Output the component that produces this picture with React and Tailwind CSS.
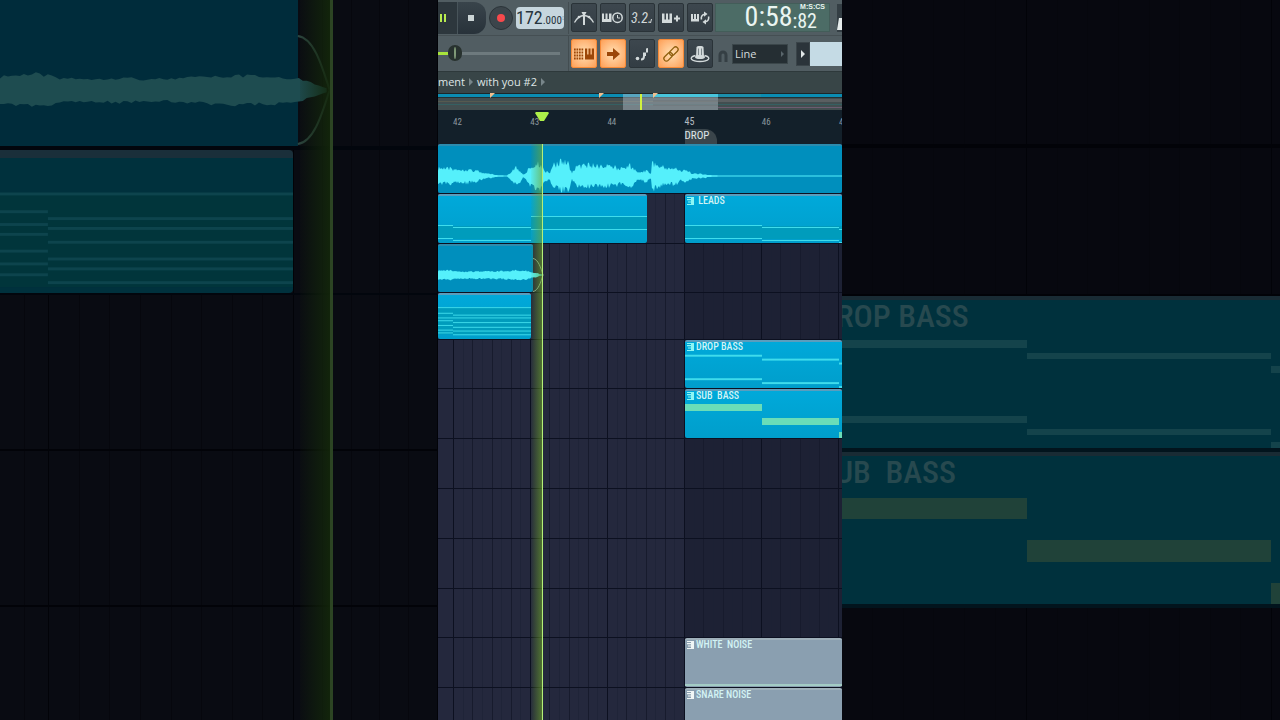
import React from 'react'
import clsx from 'clsx'

const VIEW = 404
const pct = (n, total = VIEW) => `${(n / total) * 100}%`

// [x, amplitude] pairs along the vocal clip
const VOCAL = [
  [0, 9], [10, 9], [20, 8], [30, 8], [40, 6], [46, 3], [56, 2], [69, 1], [73, 5], [78, 10], [82, 7], [85, 2], [88, 3],
  [91, 10], [97, 15], [103, 14], [107, 6], [112, 5], [115, 13], [121, 17], [130, 16], [134, 4], [138, 11], [150, 13],
  [162, 12], [176, 11], [185, 8], [191, 14], [198, 6], [203, 4], [208, 7], [213, 3], [214, 15], [222, 12], [230, 9],
  [238, 10], [243, 5], [247, 7], [255, 3], [268, 2], [285, 1], [404, 1],
]
const PAD = [[0, 5], [12, 5], [22, 4], [45, 4], [60, 4], [75, 5], [86, 5], [95, 3], [105, 1]]
const PAD_BIG = [[0, 14], [36, 17], [60, 13], [90, 12], [130, 13], [150, 11], [190, 13], [240, 15], [280, 14], [300, 12], [331, 1]]

const noise = (i) => Math.abs(Math.sin(i * 12.9898) * 43758.5453) % 1

function wavePath(points, mid, step = 1, rough = 0.35) {
  const end = points[points.length - 1][0]
  const top = []
  const bottom = []
  for (let x = 0, i = 1; x <= end; x += step, i++) {
    let k = 0
    while (k < points.length - 2 && points[k + 1][0] <= x) k++
    const [x0, a0] = points[k]
    const [x1, a1] = points[k + 1]
    const a = a0 + ((a1 - a0) * (x - x0)) / (x1 - x0)
    const up = a < 2 ? a / 2 : a * (1.05 - rough * noise(i))
    const down = a < 2 ? a / 2 : a * (1.1 - rough * noise(i + 500))
    top.push(`${x},${(mid - up).toFixed(1)}`)
    bottom.unshift(`${x},${(mid + down).toFixed(1)}`)
  }
  return `M${top.join('L')}L${bottom.join('L')}Z`
}

// notes: [x, y, width, height]
const TRACKS = [
  { h: 'h-[50px]', clips: [{ x: 0, w: 404, kind: 'vocal' }] },
  {
    h: 'h-[50px]',
    clips: [
      { x: 0, w: 209, shade: [[0, 32, 93, 13], [93, 23, 116, 13]], notes: [[0, 31, 15, 1], [0, 44, 15, 1], [15, 33, 78, 1], [15, 46, 78, 1], [93, 22, 116, 1], [93, 35, 116, 1]] },
      { x: 247, w: 157, name: ' LEADS', shade: [[0, 32, 157, 13]], notes: [[0, 31, 77, 1], [0, 44, 77, 1], [77, 33, 77, 1], [77, 46, 77, 1], [154, 35, 3, 1], [154, 48, 3, 1]] },
    ],
  },
  { h: 'h-[49px]', clips: [{ x: 0, w: 95, kind: 'pad' }] },
  {
    h: 'h-[47px]',
    clips: [
      {
        x: 0, w: 93, shade: [[0, 15, 93, 29]],
        notes: [[0, 15, 93, 1], [0, 21, 15, 1], [0, 26, 15, 1], [0, 29, 15, 1], [0, 34, 15, 1], [0, 39, 15, 1], [0, 42, 15, 1], [15, 23, 78, 1], [15, 26, 78, 1], [15, 31, 78, 1], [15, 36, 78, 1], [15, 40, 78, 1], [15, 44, 78, 1]],
      },
    ],
  },
  { h: 'h-[49px]', clips: [{ x: 247, w: 157, name: 'DROP BASS', notes: [[0, 15, 77, 2], [0, 39, 77, 2], [77, 19, 77, 2], [77, 43, 77, 2], [154, 23, 3, 2], [154, 47, 3, 2]] }] },
  { h: 'h-[50px]', clips: [{ x: 247, w: 157, name: 'SUB  BASS', green: true, notes: [[0, 15, 77, 7], [77, 29, 77, 7], [154, 43, 3, 7]] }] },
  { h: 'h-[50px]', clips: [] },
  { h: 'h-[50px]', clips: [] },
  { h: 'h-[50px]', clips: [] },
  { h: 'h-[49px]', clips: [] },
  { h: 'h-[50px]', clips: [{ x: 247, w: 157, name: 'WHITE  NOISE', kind: 'noise', green: true, notes: [[0, 46, 157, 2]] }] },
  { h: 'h-[50px]', clips: [{ x: 247, w: 157, name: 'SNARE NOISE', kind: 'noise' }] },
]

const NARROW = "font-['Roboto_Condensed',Roboto,sans-serif]"

function ClipIcon() {
  return (
    <svg viewBox="0 0 7 8" className="w-[7px] h-2 shrink-0 fill-current">
      <path d="M0 0h7v8H0V7h4V5.5H1v-1h3V3.200H0V2h4V1H0z" />
    </svg>
  )
}

function Clip({ clip, offset }) {
  const { w, name, kind, notes = [], shade = [], green } = clip
  const audio = kind === 'vocal' || kind === 'pad'
  return (
    <div
      className={clsx(
        'grid h-full rounded-xs border-t-2 overflow-visible',
        audio && 'bg-[#008fbd] border-[#2d8cae]',
        kind === 'noise' && 'bg-[#8a9fb0] border-[#9fb0ba]',
        !kind && 'bg-linear-to-b from-[#00a9da] to-[#009ecb] border-[#5a9dbd]',
      )}
      style={{ width: pct(w), marginLeft: pct(offset) }}
    >
      {kind === 'vocal' && (
        <svg viewBox="0 2 404 47" preserveAspectRatio="none" className="w-full h-full min-h-0 fill-[#55f0fb]">
          <path d={wavePath(VOCAL, 32, 1, 0.5)} />
        </svg>
      )}
      {kind === 'pad' && (
        <svg viewBox="0 2 95 46" preserveAspectRatio="none" className="w-full h-full min-h-0 overflow-visible">
          <path d={wavePath(PAD, 31)} className="fill-[#55f0fb]" />
          <path d="M95 14.500C100 15 103 24 105 31C103 38 100 47 95 47.500" className="fill-none stroke-[#8fb5a0]" />
        </svg>
      )}
      {!audio && (
        <svg viewBox={`0 2 ${w} 47`} preserveAspectRatio="none" className="w-full h-full min-h-0 [grid-area:1/1]">
          {shade.map((n, i) => <rect key={i} x={n[0]} y={n[1]} width={n[2]} height={n[3]} className="fill-[#009cbc]" />)}
          {notes.map((n, i) => (
            <rect key={i} x={n[0]} y={n[1]} width={n[2]} height={n[3]} className={kind === 'noise' ? 'fill-[#a3cbc4]' : green ? 'fill-[#6addb8]' : 'fill-[#3fdcec]'} />
          ))}
        </svg>
      )}
      {name && (
        <div className={clsx('[grid-area:1/1] flex items-center self-start gap-0.5 pl-0.5 h-2.5', kind === 'noise' ? 'text-[#f0f6f6]' : 'text-[#8cf6f4]')}>
          <ClipIcon />
          <span className={clsx('whitespace-pre text-[10px] leading-3 font-medium text-[#d3f3f4]', NARROW)}>{name}</span>
        </div>
      )}
    </div>
  )
}

function Track({ track }) {
  let cursor = 0
  return (
    <div className={clsx('flex shrink-0 border-b border-[#0c1020]', track.h)}>
      {track.clips.map((clip, i) => {
        const offset = clip.x - cursor
        cursor = clip.x + clip.w
        return <Clip key={i} clip={clip} offset={offset} />
      })}
    </div>
  )
}

function Beats() {
  return Array.from({ length: 8 }, (_, i) => (
    <i key={i} className={clsx('flex-1 border-l', i === 0 ? 'border-[#0c1020]' : i % 2 ? 'border-[#1d2135]/60' : 'border-[#171b2d]')} />
  ))
}

function Grid() {
  return (
    <div className="[grid-area:1/1] flex">
      <div className="grow-15 basis-0 bg-[#24283d]" />
      {[42, 43, 44].map((bar) => (
        <div key={bar} className="flex grow-77 basis-0 bg-[#24283d]"><Beats /></div>
      ))}
      {[45, 46].map((bar) => (
        <div key={bar} className="flex grow-77 basis-0 bg-[#1d2134]"><Beats /></div>
      ))}
      <div className="grow-3 basis-0 bg-[#1d2134] border-l border-[#0c1020]" />
    </div>
  )
}

function ToolButton({ label, active, children }) {
  return (
    <button
      aria-label={label}
      className={clsx(
        'w-[26px] h-[29px] shrink-0 grid place-items-center rounded-xs border',
        active
          ? 'bg-radial from-[#ffe0b4] to-[#fd9f55] border-[#f58a38] text-[#9c4708]'
          : 'bg-linear-to-b from-[#3d474e] to-[#333d44] border-[#2a3338] text-[#d3dadb]',
      )}
    >
      <svg viewBox="0 0 22 22" className="w-[22px] h-[22px] fill-none stroke-current">{children}</svg>
    </button>
  )
}

function Toolbar() {
  return (
    <div className="flex flex-col bg-[#515d62] overflow-hidden">
      <div className="flex items-center h-9 border-b border-[#454f53]">
        <div className="flex items-center w-[131px] shrink-0 border-r border-[#434d51]">
          <button aria-label="Pause" className="w-5 h-8 grid place-items-center bg-[#2d373d] border-r border-[#48545a]">
            <svg viewBox="0 0 7 8" className="w-[7px] h-2 mr-2 fill-[#b9ec4f]"><path d="M0 0h2v8H0zM4 0h2v8H4z" /></svg>
          </button>
          <button aria-label="Stop" className="w-7 h-8 grid place-items-center rounded-r-xl bg-linear-to-b from-[#39444b] to-[#28323a]">
            <span className="w-[6px] h-[6px] mr-0.5 bg-[#ccd5d6]" />
          </button>
          <button aria-label="Record" className="w-6 h-6 ml-[3px] grid place-items-center rounded-full bg-[#3c454b] border border-[#2b3439]">
            <span className="w-2 h-2 rounded-full bg-[#f8494c]" />
          </button>
          <div className={clsx('flex items-baseline justify-center w-12 h-[22px] ml-[3px] rounded-sm bg-[#c6d6de] text-[#26343d]', NARROW)}>
            <span className="text-lg leading-[22px]">172</span>
            <span className="text-[11px]">.000</span>
            <svg viewBox="0 0 5 12" className="w-[5px] h-3 self-center fill-[#92a2aa]"><path d="M0 4l2.500-3L5 4zM0 8h5l-2.500 3z" /></svg>
          </div>
        </div>
        <div className="flex gap-[3px] ml-0.5">
          <ToolButton label="Metronome">
            <path d="M1.500 15.500C4 11 7 8.500 11 8.500s7 2.500 9.500 7" strokeWidth="1.300" />
            <path d="M8.500 5h5L12 8v10h-2V8z" className="fill-current" stroke="none" />
            <circle cx="6" cy="10" r="1.300" className="fill-current" stroke="none" />
            <circle cx="16" cy="10" r="1.300" className="fill-current" stroke="none" />
          </ToolButton>
          <ToolButton label="Wait for input">
            <path d="M0 6.500h2v5.500h1.500V6.500h2V12H7V6.500h2.500V15H0z" className="fill-current" stroke="none" />
            <circle cx="15.500" cy="10.700" r="4.700" strokeWidth="1.500" />
            <path d="M15.500 8v3h2.500" />
          </ToolButton>
          <ToolButton label="Countdown">
            <text x="0" y="16" className="fill-current stroke-none text-[14px] italic font-['Roboto_Condensed',Roboto,sans-serif]">3.2.</text>
            <path d="M20.500 12l-1 4" />
          </ToolButton>
          <ToolButton label="Overdub">
            <path d="M2 6.500h2.500v6H6v-6h2v6h1.500v-6H12v9.500H2z" className="fill-current" stroke="none" />
            <path d="M17 8.500v6M14 11.500h6" strokeWidth="2" />
          </ToolButton>
          <ToolButton label="Loop record">
            <path d="M2 7h2v5h1V7h2v5h1V7h2v7.500H2z" className="fill-current" stroke="none" />
            <path d="M12.500 12.500a4 4 0 0 1 3-5.300M19.500 9.500a4 4 0 0 1-3 5.300" strokeWidth="1.600" />
            <path d="M15 4.500l3.500 2.500-3.500 2.800zM17 12.200l-3.500 2.800 3.500 2.500z" className="fill-current" stroke="none" />
          </ToolButton>
        </div>
        <div className={clsx('flex items-end justify-end w-[115px] h-[29px] ml-0.5 shrink-0 bg-[#4c6c66] border border-[#435d59] text-[#eaf5f1]', NARROW)}>
          <span className="text-[28px] leading-7">0:58</span>
          <div className="flex flex-col pr-1">
            <span className="self-end text-[7px] leading-2 font-bold font-['Liberation_Sans',sans-serif]">M:S:CS</span>
            <span className="pr-2 text-xl leading-5">:82</span>
          </div>
        </div>
        <div className="w-px h-9 ml-1 bg-[#3e484c]" />
        <button aria-label="Pattern song" className="w-[26px] h-7 ml-[3px] shrink-0 bg-[#343e44]">
          <svg viewBox="0 0 26 28" className="fill-[#e6ecec]"><path d="M0 26l2-12h9l3 12z" /></svg>
        </button>
      </div>

      <div className="flex items-center h-[35px]">
        <div className="flex items-center w-[131px] h-full shrink-0 border-r border-[#434d51]">
          <input
            type="range"
            aria-label="Pitch"
            defaultValue="9"
            className="w-[122px] h-5 appearance-none bg-transparent [&::-webkit-slider-runnable-track]:h-[3px] [&::-webkit-slider-runnable-track]:bg-linear-to-r [&::-webkit-slider-runnable-track]:from-[#a9e53c] [&::-webkit-slider-runnable-track]:from-12% [&::-webkit-slider-runnable-track]:to-[#6e7a7e] [&::-webkit-slider-runnable-track]:to-12% [&::-webkit-slider-thumb]:appearance-none [&::-webkit-slider-thumb]:w-[14px] [&::-webkit-slider-thumb]:h-4 [&::-webkit-slider-thumb]:-mt-[7px] [&::-webkit-slider-thumb]:rounded-full [&::-webkit-slider-thumb]:border-x-[6px] [&::-webkit-slider-thumb]:border-y-2 [&::-webkit-slider-thumb]:border-[#28322f] [&::-webkit-slider-thumb]:bg-[#809a78]"
          />
        </div>
        <div className="flex gap-[3px] ml-0.5">
          <ToolButton label="Typing keyboard" active>
            <path d="M1 6.500h10M1 9.500h10M1 12.500h10M1 15.500h10" strokeWidth="2" strokeDasharray="1.700 .8" />
            <path d="M12 5.500h2.200v6h1.300v-6h2v6h1.300v-6H21v11h-9z" className="fill-current" stroke="none" />
          </ToolButton>
          <ToolButton label="Step" active>
            <path d="M5 9h6V5l7 6-7 6v-4H5z" className="fill-current" stroke="none" />
          </ToolButton>
          <ToolButton label="Note slide">
            <circle cx="6.500" cy="15.500" r="1.800" className="fill-current" stroke="none" />
            <path d="M10 16.500c2 0 3-1.500 3-3.500" strokeWidth="2" />
            <path d="M12 9.500h3v3.500h-3zM15 5.500l2-.5v4.500h-2z" className="fill-current" stroke="none" />
          </ToolButton>
          <ToolButton label="Link" active>
            <g transform="rotate(-45 11 11)" strokeWidth="1.300" className="stroke-[#91600f]">
              <rect x="2" y="8.500" width="10" height="5" rx="2.500" />
              <rect x="10" y="8.500" width="10" height="5" rx="2.500" />
            </g>
          </ToolButton>
          <ToolButton label="Plugin">
            <path d="M7.500 4c0-1.500 7-1.500 7 0l.5 10H7z" className="fill-current" stroke="none" />
            <path d="M9.500 5.500v7M12.500 5.500v7" className="stroke-[#7b868a]" />
            <path d="M6.500 12.500c-8 2-4 6 4.500 6s12.500-4 4.500-6" strokeWidth="1.300" />
            <ellipse cx="11" cy="14" rx="5" ry="2" className="fill-current" stroke="none" />
          </ToolButton>
        </div>
        <svg viewBox="0 0 10 12" className="w-[10px] h-3 ml-[5px] mt-1 shrink-0 fill-none stroke-[#353f44] stroke-3"><path d="M2 12V5a3 3 0 0 1 6 0v7" /></svg>
        <div className="grid ml-1 shrink-0 items-center">
          <select aria-label="Snap" className="[grid-area:1/1] appearance-none w-14 h-5 px-0.5 bg-[#252e33] border border-[#3b464a] text-[#d5dcdd] text-[11px] leading-4 font-['Open_Sans',sans-serif]">
            <option>Line</option>
          </select>
          <svg viewBox="0 0 3 6" className="[grid-area:1/1] justify-self-end w-[3px] h-[6px] mr-1 fill-[#59656b] pointer-events-none"><path d="M0 0l3 3-3 3z" /></svg>
        </div>
        <button aria-label="Next pattern" className="w-[14px] h-6 ml-2 shrink-0 grid place-items-center bg-[#2b343a] border border-[#3a4449]">
          <svg viewBox="0 0 4 8" className="w-1 h-2 fill-[#e1e7e8]"><path d="M0 0l4 4-4 4z" /></svg>
        </button>
        <div className="flex-1 h-6 bg-[#c5dbe5]" />
      </div>
    </div>
  )
}

function Crumb() {
  return <svg viewBox="0 0 4 8" className="w-1 h-2 fill-[#78868a]"><path d="M0 0l4 4-4 4z" /></svg>
}

function Breadcrumbs() {
  return (
    <nav className="flex items-center gap-1 h-[22px] pb-px bg-[#384547] border-t border-[#2e393b] text-[11px] leading-4 font-medium text-[#dfe6e6] font-['Open_Sans',sans-serif] whitespace-nowrap">
      <a href="#arrangement">ment</a>
      <Crumb />
      <a href="#pattern">with you #2</a>
      <Crumb />
    </nav>
  )
}

function Minimap() {
  return (
    <svg viewBox="0 0 404 17" preserveAspectRatio="none" className="w-full h-[17px] shrink-0">
      <path d="M0 0h404v17H0z" className="fill-[#424e50]" />
      <path d="M0 0h404v1H0z" className="fill-[#1d2628]" />
      <path d="M0 1h215v3H0zM323 1h81v3h-81z" className="fill-[#0b8cb2]" />
      <path d="M215 1h108v3H215z" className="fill-[#35b9d5]" />
      <path d="M280 1h43v3h-43z" className="fill-[#1c8fac]" />
      <path d="M0 4h404v1H0z" className="fill-[#243134]" />
      <path d="M0 8h404v1H0z" className="fill-[#565a50]" />
      <path d="M0 11h404v1H0z" className="fill-[#356062]" />
      <path d="M280 6h124v3H280z" className="fill-[#5a5f61]" />
      <path d="M280 14h124v1H280z" className="fill-[#6c5c71]" />
      <path d="M185 1h95v16h-95z" className="fill-[#b6c4cc]/45" />
      <path d="M215 1h65v3h-65z" className="fill-[#48c5dc]" />
      <path d="M215 8h65M215 12h65" className="stroke-[#6f7479]" />
      <path d="M52 0h5l-5 5zM161 0h5l-5 5zM215 0h5l-5 5z" className="fill-[#f0c090]" />
      <path d="M202 1h2v16h-2z" className="fill-[#d1f23f]" />
    </svg>
  )
}

function Ruler() {
  return (
    <div className={clsx('flex h-[34px] shrink-0 pt-1.5 bg-[#13202a] text-[9px] leading-3 text-[#8b979e] overflow-hidden', NARROW)}>
      <div className="grow-15 basis-0" />
      {[42, 43, 44, 45, 46].map((bar) => (
        <div key={bar} className="grow-77 basis-0 min-w-0">
          <div className={clsx(bar === 45 && 'text-[10px] text-[#b4bdc2]')}>{bar}</div>
          {bar === 45 && (
            <div className="w-8 h-4 rounded-tr-xl bg-[#3a454b] text-[11px] leading-[14px] text-[#dfe5e7] mt-px">DROP</div>
          )}
        </div>
      ))}
      <div className="grow-3 basis-0 min-w-0">47</div>
    </div>
  )
}

function Playhead() {
  return (
    <div className="absolute inset-y-0 right-[74%] w-3 pointer-events-none">
      <div className="absolute top-[34px] bottom-0 right-0 w-3 border-r border-[#b4ef78] bg-linear-to-r from-[#5f8a20]/5 to-[#6fa52a]/60" />
      <svg viewBox="0 0 14 10" className="absolute top-0.5 -right-[6px] w-[14px] h-[10px] fill-[#adf04a]"><path d="M0 1l1-1h12l1 1-5 8H5z" /></svg>
    </div>
  )
}

function Playlist() {
  return (
    <div className="relative flex flex-col flex-1 min-h-0 overflow-hidden">
      <Ruler />
      <div className="grid flex-1">
        <Grid />
        <div className="[grid-area:1/1] flex flex-col">
          {TRACKS.map((track, i) => <Track key={i} track={track} />)}
        </div>
      </div>
      <Playhead />
    </div>
  )
}

function Notes({ w, h, shade = [], notes, fill }) {
  return (
    <svg viewBox={`0 0 ${w} ${h}`} preserveAspectRatio="none" className="[grid-area:1/1] w-full h-full min-h-0">
      {shade.map((n, i) => <rect key={i} x={n[0]} y={n[1]} width={n[2]} height={n[3]} className="fill-[#01353b]" />)}
      {notes.map((n, i) => <rect key={i} x={n[0]} y={n[1]} width={n[2]} height={n[3]} className={fill} />)}
    </svg>
  )
}

function DimCells({ count }) {
  return Array.from({ length: count }, (_, i) => <i key={i} className={clsx('flex-1 border-r', i === count - 1 ? 'border-[#020308]' : 'border-[#06070d]')} />)
}

function LeftBackdrop() {
  return (
    <aside aria-hidden="true" className="relative grid overflow-hidden bg-[#090b12] min-w-0">
      <div className="[grid-area:1/1] flex">
        <div className="flex grow-49 basis-0"><DimCells count={2} /></div>
        <div className="flex grow-245 basis-0"><DimCells count={8} /></div>
        <div className="flex grow-144 basis-0"><DimCells count={5} /></div>
      </div>
      <div className="[grid-area:1/1] flex flex-col min-w-0">
        <div className="h-[150px] shrink-0 border-b-4 border-[#02060d]">
          <div className="w-[68%] h-full bg-[#002c3b]">
            <svg viewBox="0 0 299 146" preserveAspectRatio="none" className="w-full h-full overflow-visible">
              <path d="M299 36C315 38 323 65 331 90C323 115 315 142 299 144" className="fill-none stroke-[#2c4640] stroke-2" />
              <path d={wavePath(PAD_BIG, 90, 4, 0.25)} className="fill-[#1e4c50]" />
            </svg>
          </div>
        </div>
        <div className="h-[145px] shrink-0 border-b-2 border-[#02060d]">
          <div className="grid w-[67%] h-full border-t-8 border-[#1a2f3a] rounded-r-sm bg-[#00313d]">
            <Notes
              w={294} h={137} fill="fill-[#0d444d]" shade={[[0, 37, 294, 94]]}
              notes={[[0, 35, 294, 3], [0, 53, 48, 3], [0, 66, 48, 3], [0, 76, 48, 3], [0, 93, 48, 3], [0, 106, 48, 3], [0, 117, 48, 3], [48, 60, 246, 3], [48, 70, 246, 3], [48, 84, 246, 3], [48, 101, 246, 3], [48, 111, 246, 3], [48, 125, 246, 3]]}
            />
          </div>
        </div>
        <div className="h-[156px] shrink-0 border-b-2 border-[#020308]" />
        <div className="h-[156px] shrink-0 border-b-2 border-[#020308]" />
      </div>
      <div className="absolute inset-y-0 right-[24%] w-[33px] border-r-3 border-[#2c4423] bg-linear-to-r from-[#1a2410]/10 to-[#13270a]/90" />
    </aside>
  )
}

function DimClip({ name, notes, fill }) {
  return (
    <div className="grid h-[156px] shrink-0 border-t-4 border-b-4 border-t-[#192b34] border-b-[#02141d] bg-[#00313d] overflow-hidden">
      <Notes w={438} h={148} fill={fill} notes={notes} />
      <span className={clsx('[grid-area:1/1] -ml-6 whitespace-pre text-[32px] leading-8 font-medium text-[#27494f]', NARROW)}>{name}</span>
    </div>
  )
}

function RightBackdrop() {
  return (
    <aside aria-hidden="true" className="grid overflow-hidden bg-[#07080f] min-w-0">
      <div className="[grid-area:1/1] flex">
        <div className="flex grow-185 basis-0"><DimCells count={6} /></div>
        <div className="flex grow-245 basis-0"><DimCells count={8} /></div>
        <div className="grow-8 basis-0" />
      </div>
      <div className="[grid-area:1/1] flex flex-col min-w-0">
        <div className="h-[148px] shrink-0 border-b-4 border-[#020308]" />
        <div className="h-[148px] shrink-0 border-b-2 border-[#020308]" />
        <DimClip name="DROP BASS" fill="fill-[#14434b]" notes={[[0, 40, 185, 8], [185, 53, 244, 6], [429, 66, 9, 7], [0, 116, 185, 7], [185, 129, 244, 6], [429, 142, 9, 6]]} />
        <DimClip name="SUB  BASS" fill="fill-[#204239]" notes={[[0, 42, 185, 21], [185, 84, 244, 22], [429, 127, 9, 22]]} />
      </div>
    </aside>
  )
}

export default function App() {
  return (
    <div className="grid grid-cols-[438fr_404fr_438fr] h-screen overflow-hidden bg-black">
      <LeftBackdrop />
      <main className="flex flex-col min-w-0 min-h-0 overflow-hidden">
        <Toolbar />
        <Breadcrumbs />
        <Minimap />
        <Playlist />
      </main>
      <RightBackdrop />
    </div>
  )
}
